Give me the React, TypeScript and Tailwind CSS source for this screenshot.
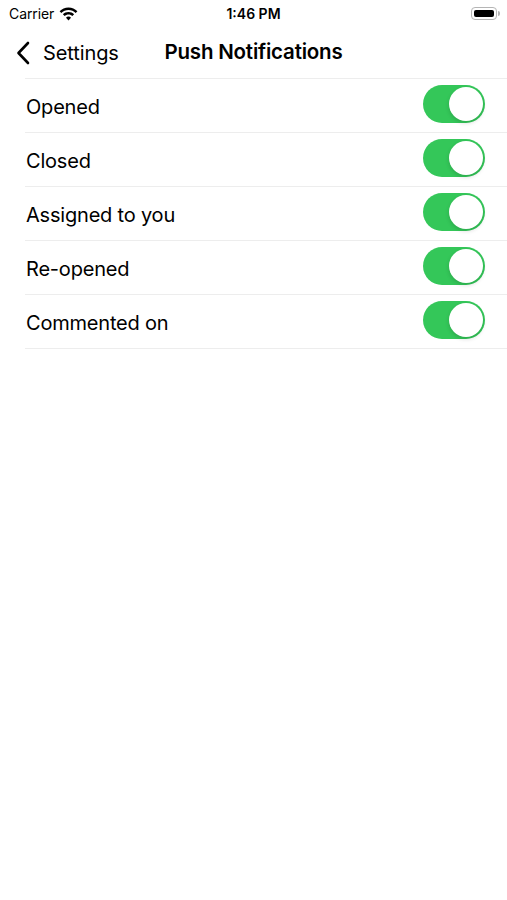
import { useState } from 'react';

const rows = ['Opened', 'Closed', 'Assigned to you', 'Re-opened', 'Commented on'];

function Wifi() {
  return (
    <svg width="19" height="14" viewBox="0 0 19 14" className="ml-[5px]">
      <path d="M9.5 0.5C6 0.5 2.9 1.9 0.6 4.2l1.7 1.8C4.2 4.1 6.7 3 9.5 3s5.3 1.1 7.2 3l1.7-1.8C16.1 1.9 13 0.5 9.5 0.5z" fill="#000" />
      <path d="M9.5 5c-2.2 0-4.2 0.9-5.6 2.3l1.7 1.8C6.6 8.1 8 7.5 9.5 7.5s2.9 0.6 3.9 1.6l1.7-1.8C13.7 5.9 11.7 5 9.5 5z" fill="#000" />
      <path d="M9.5 9.6c-1 0-1.9 0.4-2.5 1.1L9.5 13.4l2.5-2.7c-0.6-0.7-1.5-1.1-2.5-1.1z" fill="#000" />
    </svg>
  );
}

function Battery() {
  return (
    <div className="flex items-center">
      <div className="w-[26px] h-[13px] rounded-[4px] border border-[#b5b5b5] p-[2px]">
        <div className="w-full h-full rounded-[2px] bg-black" />
      </div>
      <div className="w-[2px] h-[5px] rounded-r-sm bg-[#b5b5b5] ml-[1px]" />
    </div>
  );
}

function Toggle({ on, onClick }: { on: boolean; onClick: () => void }) {
  return (
    <button
      onClick={onClick}
      className={`relative w-[62px] h-[38px] rounded-full transition-colors ${on ? 'bg-[#34c759]' : 'bg-[#e9e9eb]'}`}
    >
      <span
        className={`absolute top-[2px] w-[34px] h-[34px] rounded-full bg-white shadow-[0_2px_4px_rgba(0,0,0,0.15)] transition-all ${
          on ? 'left-[26px]' : 'left-[2px]'
        }`}
      />
    </button>
  );
}

export default function App() {
  const [state, setState] = useState(rows.map(() => true));

  return (
    <div className="w-[507px] h-[900px] bg-white text-black" style={{ fontFamily: 'Inter, "Noto Sans", sans-serif' }}>
      <div className="relative h-[27px] flex items-center pl-[9px] pr-[7px]">
        <div className="flex items-center text-[14px] tracking-[-0.1px]">
          Carrier
          <Wifi />
        </div>
        <div className="absolute left-0 right-0 text-center text-[14px] font-semibold">1:46 PM</div>
        <div className="ml-auto">
          <Battery />
        </div>
      </div>

      <div className="relative h-[51px] flex items-center">
        <div className="flex items-center pl-[16px]">
          <svg width="14" height="24" viewBox="0 0 14 24">
            <path d="M12 2L2.5 12 12 22" stroke="#000" strokeWidth="2.6" fill="none" strokeLinecap="round" strokeLinejoin="round" />
          </svg>
          <span className="ml-[13px] text-[20px] tracking-[-0.1px]">Settings</span>
        </div>
        <div className="absolute left-0 right-0 text-center text-[20.5px] font-semibold tracking-[-0.2px] pointer-events-none">
          Push Notifications
        </div>
      </div>

      <div className="ml-[25px] border-t border-[#ededed]">
        {rows.map((label, i) => (
          <div key={label} className="h-[54px] flex items-center border-b border-[#ededed] pr-[22px] pt-[3px]">
            <span className="ml-px text-[20px] tracking-[-0.2px]">{label}</span>
            <div className="ml-auto">
              <Toggle on={state[i]} onClick={() => setState((s) => s.map((v, j) => (j === i ? !v : v)))} />
            </div>
          </div>
        ))}
      </div>
    </div>
  );
}
